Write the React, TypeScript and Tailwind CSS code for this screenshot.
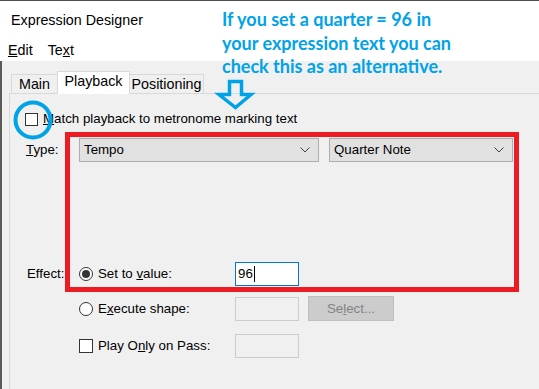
import React from 'react';

const ui = { fontFamily: '"Liberation Sans", Arial, sans-serif' };
const note = { fontFamily: 'Lato, "Open Sans", sans-serif' };

function Chevron() {
  return (
    <svg width="10" height="6" viewBox="0 0 10 6" className="shrink-0">
      <path d="M0.5 0.5 L5 5 L9.5 0.5" fill="none" stroke="#404040" strokeWidth="1" />
    </svg>
  );
}

function Combo({ label, width }: { label: string; width: string }) {
  return (
    <div className={`${width} h-[24px] flex items-center justify-between pl-[4px] pr-[8px] bg-[#e1e1e1] border border-[#adadad]`}>
      <span>{label}</span>
      <Chevron />
    </div>
  );
}

function Radio({ checked }: { checked?: boolean }) {
  return (
    <div className="w-[14px] h-[14px] rounded-full border border-[#333] bg-white flex items-center justify-center shrink-0">
      {checked && <div className="w-[8px] h-[8px] rounded-full bg-[#333]" />}
    </div>
  );
}

function Check() {
  return <div className="w-[14px] h-[14px] border border-[#333] bg-white shrink-0" />;
}

export default function App() {
  return (
    <div className="relative w-[539px] h-[389px] overflow-hidden bg-[#f0f0f0] text-black text-[13.3px]" style={ui}>
      {/* Title + menu */}
      <div className="h-[61px] bg-white border-t border-[#4d4d4d] pt-[9px]">
        <div className="h-[20px] leading-[20px] pl-[11px] text-[14.3px]">Expression Designer</div>
        <div className="mt-[10px] h-[20px] leading-[20px] flex pl-[8px] text-[14.3px]">
          <span><span className="underline">E</span>dit</span>
          <span className="ml-[15px]">Te<span className="underline">x</span>t</span>
        </div>
      </div>

      {/* Body */}
      <div className="h-[328px] border-l-2 border-[#5a5a5a] pt-[10px]">
        {/* Tabs */}
        <div className="ml-[7px] h-[23px] flex items-end text-[14.3px]">
          <div className="ml-[2px] w-[47px] h-[20px] border border-b-0 border-[#d9d9d9] flex items-center justify-center">Main</div>
          <div className="-ml-px w-[73px] h-[23px] border border-b-0 border-[#d9d9d9] bg-white relative z-10 flex items-center justify-center pb-[2px]">Playback</div>
          <div className="-ml-px w-[75px] h-[20px] border border-b-0 border-[#d9d9d9] flex items-center justify-center">Positioning</div>
        </div>

        {/* Panel */}
        <div className="-mt-px ml-[7px] h-[300px] border-t border-l border-[#d9d9d9]">
          <div className="mt-[18px] h-[14px] flex items-center">
            <div className="ml-[15px] w-[13px] h-[13px] border border-[#333] bg-white" />
            <span className="ml-[5px]"><span className="underline">M</span>atch playback to metronome marking text</span>
          </div>

          <div className="mt-[12px] h-[24px] flex items-center">
            <div className="w-[69px] pl-[16px]"><span className="underline">T</span>ype:</div>
            <Combo label="Tempo" width="w-[240px]" />
            <div className="ml-[10px]"><Combo label="Quarter Note" width="w-[184px]" /></div>
          </div>

          <div className="mt-[100px] h-[24px] flex items-center">
            <div className="w-[69px] pl-[17px]">Effect:</div>
            <div className="w-[156px] flex items-center">
              <Radio checked />
              <span className="ml-[5px]">Set to <span className="underline">v</span>alue:</span>
            </div>
            <div className="w-[64px] h-[24px] border border-[#0078d7] bg-white flex items-center pl-[2px]">
              <span>96</span>
              <span className="ml-[1px] w-px h-[16px] bg-black" />
            </div>
          </div>

          <div className="mt-[10px] h-[25px] flex items-center">
            <div className="w-[69px]" />
            <div className="w-[156px] flex items-center">
              <Radio />
              <span className="ml-[5px]">E<span className="underline">x</span>ecute shape:</span>
            </div>
            <div className="w-[64px] h-[24px] border border-[#cccccc]" />
            <div className="ml-[9px] w-[86px] h-[25px] bg-[#cccccc] border border-[#bfbfbf] text-[#838383] flex items-center justify-center">
              <span>Se<span className="underline">l</span>ect...</span>
            </div>
          </div>

          <div className="mt-[13px] h-[24px] flex items-center">
            <div className="w-[69px]" />
            <div className="w-[156px] flex items-center">
              <Check />
              <span className="ml-[5px]">Play O<span className="underline">n</span>ly on Pass:</span>
            </div>
            <div className="w-[64px] h-[24px] border border-[#cccccc]" />
          </div>
        </div>
      </div>

      {/* Annotations */}
      <div className="absolute left-[65px] top-[132px] w-[454px] h-[160px] border-[5px] border-[#ed1c24] pointer-events-none" />

      <svg className="absolute left-0 top-0 pointer-events-none" width="539" height="389">
        <circle cx="33" cy="120" r="17.5" fill="none" stroke="#00a2e8" strokeWidth="4" />
        <path d="M229.5 81.5 L241.5 81.5 L241.5 94.5 L251 94.5 L235.5 107.5 L219 94.5 L229.5 94.5 Z" fill="none" stroke="#00a2e8" strokeWidth="3.5" strokeLinejoin="miter" />
      </svg>

      <div className="absolute left-[222px] top-[8px] font-bold text-[18px] leading-[23.5px] text-[#00a2e8]" style={note}>
        <div>If you set a quarter = 96 in</div>
        <div>your expression text you can</div>
        <div>check this as an alternative.</div>
      </div>
    </div>
  );
}
